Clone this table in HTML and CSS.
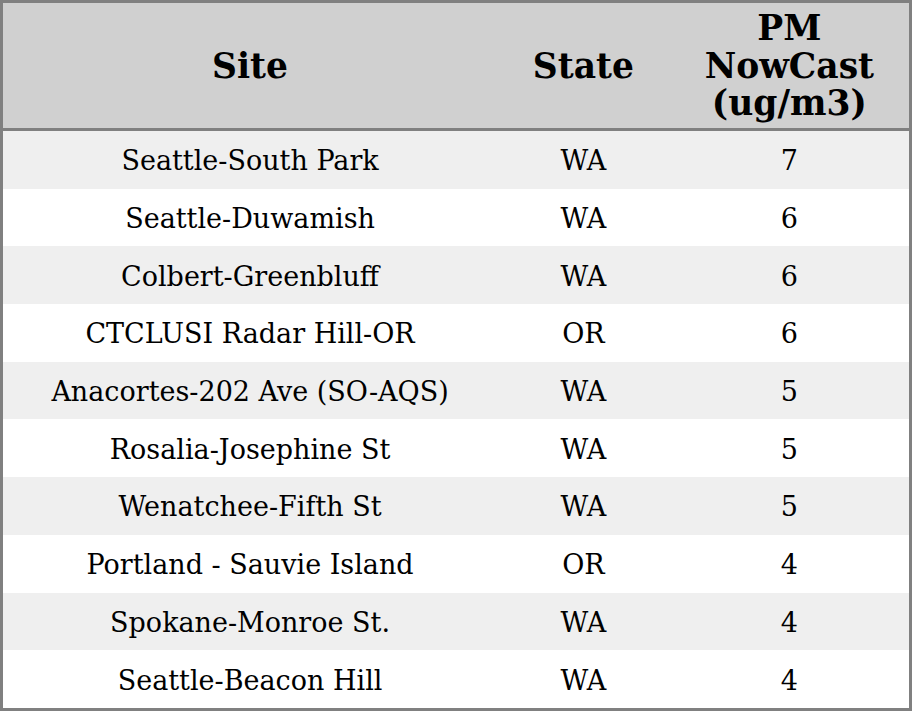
FILE: index.html
```html
<!DOCTYPE html>
<html>
<head>
<meta charset="utf-8">
<link rel="stylesheet" href="styles.css">
</head>
<body>
<table class="aq">
<colgroup><col class="c-site"><col class="c-state"><col class="c-pm"></colgroup>
<thead>
<tr><th>Site</th><th>State</th><th>PM<br>NowCast<br>(ug/m3)</th></tr>
</thead>
<tbody>
<tr><td>Seattle-South Park</td><td>WA</td><td>7</td></tr>
<tr><td>Seattle-Duwamish</td><td>WA</td><td>6</td></tr>
<tr><td>Colbert-Greenbluff</td><td>WA</td><td>6</td></tr>
<tr><td>CTCLUSI Radar Hill-OR</td><td>OR</td><td>6</td></tr>
<tr><td>Anacortes-202 Ave (SO-AQS)</td><td>WA</td><td>5</td></tr>
<tr><td>Rosalia-Josephine St</td><td>WA</td><td>5</td></tr>
<tr><td>Wenatchee-Fifth St</td><td>WA</td><td>5</td></tr>
<tr><td>Portland - Sauvie Island</td><td>OR</td><td>4</td></tr>
<tr><td>Spokane-Monroe St.</td><td>WA</td><td>4</td></tr>
<tr><td>Seattle-Beacon Hill</td><td>WA</td><td>4</td></tr>
</tbody>
</table>
</body>
</html>
```
FILE: styles.css
```css
html, body { margin: 0; padding: 0; background: #fff; }
.aq {
  width: 912px;
  height: 711px;
  border-collapse: collapse;
  table-layout: fixed;
  border: 3px solid #808080;
  font-family: "DejaVu Serif", serif;
  color: #000;
}
.c-site { width: 494px; }
.c-state { width: 172px; }
.c-pm { width: 240px; }
.aq th {
  background: #d0d0d0;
  font-weight: bold;
  font-size: 34.5px;
  line-height: 37.5px;
  height: 123px;
  padding: 2px 0 0;
  text-align: center;
  vertical-align: middle;
  border-bottom: 3px solid #808080;
}
.aq td {
  font-size: 27px;
  line-height: 32px;
  text-align: center;
  padding: 3px 0 0;
  height: 54.7px;
}
.aq tbody tr:nth-child(odd) { background: #efefef; }
.aq tbody tr:nth-child(even) { background: #fff; }
```
